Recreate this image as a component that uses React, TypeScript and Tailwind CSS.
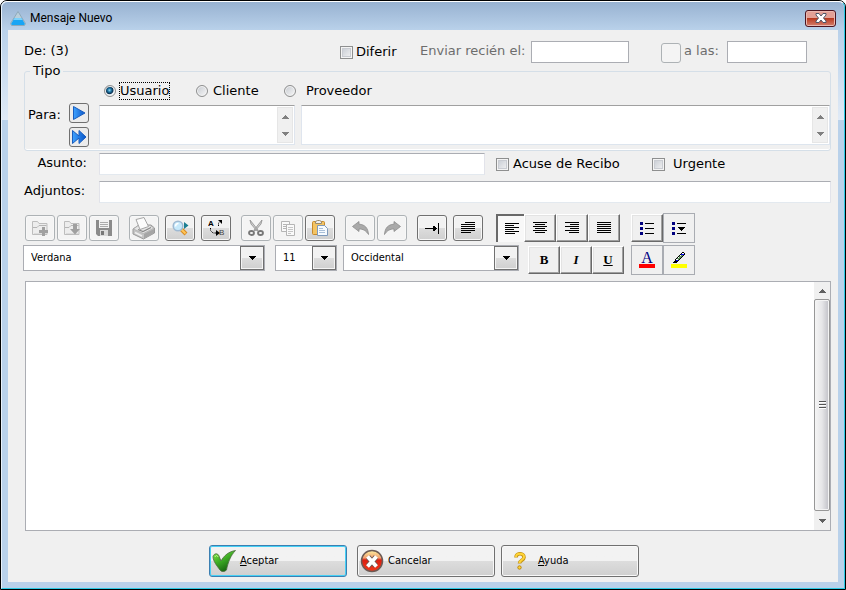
import type { InputHTMLAttributes, ReactNode } from 'react';

const fieldClass =
    'min-w-0 border border-t-[#abadb3] border-x-[#e2e3ea] border-b-[#e3e9ef] bg-white text-[13px] leading-4 outline-none';
const plainFieldClass = 'h-[22px] border border-[#abadb3] bg-white px-1 text-[13px] outline-none';

const Check = (props: InputHTMLAttributes<HTMLInputElement>) => (
    <input
        type="checkbox"
        className="size-[13px] shrink-0 appearance-none border border-[#8e8f8f] bg-linear-to-br from-[#c3c8d0] to-[#f6f6f6] shadow-[inset_0_0_0_1px_#f4f4f4,inset_0_0_0_2px_#c9ccd2] checked:bg-[#4b6a9c]"
        {...props}
    />
);

const Radio = (props: InputHTMLAttributes<HTMLInputElement>) => (
    <input
        type="radio"
        name="tipo"
        className="size-3 shrink-0 appearance-none rounded-full border border-[#8e8f8f] bg-linear-to-br from-[#c6cad0] to-[#f8f8f8] shadow-[inset_0_0_0_1px_#f4f4f4] checked:bg-[radial-gradient(circle_at_45%_42%,#9fdcf5_0,#1f7aa8_22%,#0b2f4f_44%,#eef2f5_56%)]"
        {...props}
    />
);

const Arrow = ({ down = false, color = '#606060' }: { down?: boolean; color?: string }) => (
    <svg width="7" height="4" viewBox="0 0 7 4" fill={color} shapeRendering="crispEdges">
        {down ? <path d="M0 0h7v1H0zM1 1h5v1H1zM2 2h3v1H2zM3 3h1v1H3z" /> : <path d="M3 0h1v1H3zM2 1h3v1H2zM1 2h5v1H1zM0 3h7v1H0z" />}
    </svg>
);

const SmallScroll = () => (
    <div className="my-px mr-px flex w-4 shrink-0 flex-col justify-between border border-[#e6e6e6] bg-[#f0f0f0]">
        <button type="button" aria-label="Subir" className="flex h-[18px] items-center justify-center">
            <Arrow color="#808080" />
        </button>
        <button type="button" aria-label="Bajar" className="flex h-[18px] items-center justify-center">
            <Arrow down color="#808080" />
        </button>
    </div>
);

const ScrollArea = ({ label, className }: { label: string; className: string }) => (
    <div className={`flex h-10 border border-t-[#a0a0a0] border-x-[#dfe5ee] border-b-[#dde5ee] bg-white ${className}`}>
        <textarea aria-label={label} className="min-w-0 flex-1 resize-none overflow-hidden px-1 text-[13px] outline-none" />
        <SmallScroll />
    </div>
);

type ToolProps = { label: string; disabled?: boolean; children: ReactNode };

const Tool = ({ label, disabled, children }: ToolProps) => (
    <button
        type="button"
        aria-label={label}
        disabled={disabled}
        className="flex h-[26px] w-[30px] items-center justify-center rounded-[3px] border border-[#707070] bg-linear-to-b from-[#f2f2f2] from-50% via-[#dddddd] via-50% to-[#cfcfcf] shadow-[inset_0_0_0_1px_#f8f8f8] disabled:border-[#adb2b5] disabled:bg-[#f4f4f4] disabled:bg-none"
    >
        {children}
    </button>
);

const Toggle = ({ label, pressed, children }: { label: string; pressed?: boolean; children: ReactNode }) => (
    <button
        type="button"
        aria-label={label}
        aria-pressed={!!pressed}
        className={
            pressed
                ? 'flex h-7 w-7 items-center justify-center border-t-2 border-l-2 border-[#696969] bg-[#f8f8f8] pt-px pl-0.5'
                : 'flex h-7 w-8 items-center justify-center border border-t-white border-r-[#696969] border-b-[#696969] border-l-white bg-[#f0f0f0] font-[Liberation_Serif,serif] text-[13px] font-bold shadow-[inset_-1px_-1px_0_#a0a0a0,inset_1px_1px_0_#e3e3e3]'
        }
    >
        {children}
    </button>
);

const FlatTool = ({ label, children }: { label: string; children: ReactNode }) => (
    <button
        type="button"
        aria-label={label}
        className="flex h-[30px] w-8 items-center justify-center border border-[#a9acb2] bg-[#f0f0f0]"
    >
        {children}
    </button>
);

const Combo = ({ label, value, width }: { label: string; value: string; width: string }) => (
    <div className={`relative h-[26px] shrink-0 ${width}`}>
        <select
            aria-label={label}
            className="size-full appearance-none border border-[#abadb3] bg-white pr-6 pl-[7px] text-[11px] font-[DejaVu_Sans_Condensed,DejaVu_Sans,sans-serif] outline-none"
        >
            <option>{value}</option>
        </select>
        <span className="pointer-events-none absolute top-px right-px flex h-6 w-6 items-center justify-center border border-[#707070] bg-linear-to-b from-[#f2f2f2] from-50% via-[#dddddd] via-50% to-[#cfcfcf] shadow-[inset_0_0_0_1px_#f4f4f4]">
            <Arrow down color="#000" />
        </span>
    </div>
);

const Lines = ({ rows }: { rows: [number, number][] }) => (
    <svg width="14" height="13" viewBox="0 0 14 13" shapeRendering="crispEdges">
        {rows.map(([x, w], i) => (
            <rect key={i} x={x} y={i * 2} width={w} height="1" fill="#000" />
        ))}
    </svg>
);

const leftRows: [number, number][] = [[0, 14], [0, 9], [0, 14], [0, 9], [0, 14], [0, 10]];
const centerRows: [number, number][] = [[0, 14], [2, 10], [0, 14], [2, 10], [0, 14], [2, 10]];
const rightRows: [number, number][] = [[0, 14], [5, 9], [0, 14], [5, 9], [0, 14], [4, 10]];
const fullRows: [number, number][] = [[0, 14], [0, 14], [0, 14], [0, 14], [0, 14], [0, 14]];
const paragraphRows: [number, number][] = [[4, 10], [0, 14], [0, 14], [0, 14], [0, 14], [0, 10]];

const FolderIcon = ({ children }: { children: ReactNode }) => (
    <svg width="16" height="16" viewBox="0 0 16 16">
        <path d="M.5 14.5v-13h5l1.500 2h8v11z" fill="#ededed" stroke="#bdbdbd" />
        <path d="M1 7.500h4l2-2h7.500" fill="none" stroke="#b5b5b5" />
        <path d="M2 13.500h12" stroke="#dcdcdc" />
        {children}
    </svg>
);

const SaveIcon = () => (
    <svg width="16" height="16" viewBox="0 0 16 16">
        <path d="M0 0h16v16H2l-2-2z" fill="#8b8b8b" />
        <path d="M3 0h10v8H3z" fill="#f1f1f1" />
        <path d="M4 2.500h8M4 4.500h8M4 6.500h8" stroke="#aaa" />
        <path d="M4 10h8v6H4z" fill="#d9d9d9" />
        <path d="M5 11h3v4H5z" fill="#777" />
    </svg>
);

const PrintIcon = () => (
    <svg width="24" height="23" viewBox="0 0 24 23">
        <path d="M1 12l6-4 12 0 3.500 3v5l-11 6-10.500-5z" fill="#c4c4c4" stroke="#9a9a9a" />
        <path d="M1.500 12l10 4.500 10.500-5.500-4-2.500-11-.5z" fill="#e6e6e6" stroke="#a8a8a8" strokeWidth=".7" />
        <path d="M4 2.500l8-2 4.500 9-8.500 3z" fill="#fcfcfc" stroke="#a5a5a5" />
        <path d="M6 12.500l5 2 8-4" fill="none" stroke="#888" strokeWidth="1.200" />
        <path d="M12 17v4.500l10-5.500v-4z" fill="#a5a5a5" />
        <path d="M3 15.500l7 3.500" stroke="#efefef" strokeWidth="1.500" />
    </svg>
);

const FindIcon = () => (
    <svg width="17" height="16" viewBox="0 0 17 16">
        <path d="M9 9l5 5" stroke="#d88a22" strokeWidth="4" />
        <path d="M9 9l4.500 4.500" stroke="#ffc659" strokeWidth="2" />
        <circle cx="6" cy="6" r="4.800" fill="#c6e9fb" stroke="#9fb9d2" strokeWidth="1.500" />
        <path d="M3.500 6.500a3 3 0 0 1 3-3" stroke="#fff" strokeWidth="1.500" fill="none" />
        <path d="M12 2v7l4.500-3.500z" fill="#1c7e92" />
    </svg>
);

const ReplaceIcon = () => (
    <svg width="17" height="16" viewBox="0 0 17 16" fontFamily="Liberation Sans, sans-serif" fontSize="8">
        <text x="0" y="6" fontWeight="bold">A</text>
        <text x="11" y="15" fill="#444">B</text>
        <path d="M2.500 8v2.500l2.500 2.500h3" stroke="#000" strokeDasharray="1.500 1" fill="none" />
        <path d="M8 10l4 3-4 3z" />
        <path d="M10.500 6V3l2-1.500" stroke="#000" fill="none" strokeDasharray="1.500 1" />
        <path d="M10 0h4v4z" />
    </svg>
);

const CutIcon = () => (
    <svg width="16" height="16" viewBox="0 0 16 16" fill="none">
        <path d="M2 0l1 4 6 7 1-1zM14 0l-1 4-6 7-1-1z" fill="#cfcfcf" stroke="#8d8d8d" strokeWidth=".8" />
        <ellipse cx="3.500" cy="13" rx="2.500" ry="2" stroke="#777" strokeWidth="1.800" />
        <ellipse cx="12.500" cy="13" rx="2.500" ry="2" stroke="#777" strokeWidth="1.800" />
    </svg>
);

const CopyIcon = () => (
    <svg width="14" height="15" viewBox="0 0 14 15" fill="#fafafa" stroke="#b5b5b5">
        <path d="M.5.5h8v10h-8z" />
        <path d="M2 3.500h5M2 5.500h5M2 7.500h5" />
        <path d="M5.500 3.500h8v11h-8z" />
        <path d="M7 6.500h5M7 8.500h5M7 10.500h5M7 12.500h3" stroke="#c5c5c5" />
    </svg>
);

const PasteIcon = () => (
    <svg width="16" height="16" viewBox="0 0 16 16">
        <rect x=".5" y="1.500" width="12" height="13" rx="1" fill="#f4c463" stroke="#c6892c" />
        <path d="M3.500 3.500v-2l2-1h2l2 1v2z" fill="#eee" stroke="#9a8a6a" />
        <path d="M5.500 5.500h7l3 3v7h-10z" fill="#f7fbff" stroke="#7e99bb" />
        <path d="M7 8.500h4M7 10.500h6M7 12.500h6" stroke="#a9bfd8" />
    </svg>
);

const UndoIcon = ({ redo = false }: { redo?: boolean }) => (
    <svg width="17" height="14" viewBox="0 0 17 14">
        <path
            d={
                redo
                    ? 'M16.500 5.500L10 .5v2.700C4 3.500 1 7 .5 13.500 3 9.500 6 8 10 8v2.500z'
                    : 'M.5 5.500L7 .5v2.700c6 .3 9 3.800 9.500 10.300C14 9.500 11 8 7 8v2.500z'
            }
            fill="#a9a9a9"
            stroke="#8c8c8c"
            strokeWidth=".8"
        />
    </svg>
);

const TabIcon = () => (
    <svg width="15" height="11" viewBox="0 0 15 11" shapeRendering="crispEdges">
        <path d="M0 5h12v1H0zM13 0h1v11h-1zM8 3h1v5H8zM9 3h1v5H9zM10 4h1v3h-1z" />
    </svg>
);

const ListIcon = ({ menu = false }: { menu?: boolean }) => (
    <svg width="15" height="13" viewBox="0 0 15 13" shapeRendering="crispEdges">
        <path d="M0 0h3v3H0zM0 5h3v3H0zM0 10h3v3H0z" fill="#000080" />
        {menu ? <path d="M5 1h9v1H5zM5 11h9v1H5zM6 5h7v1H6zM7 6h5v1H7zM8 7h3v1H8zM9 8h1v1H9z" /> : <path d="M5 1h9v1H5zM5 6h9v1H5zM5 11h9v1H5z" />}
    </svg>
);

const MarkerIcon = () => (
    <svg width="16" height="16" viewBox="0 0 16 16" shapeRendering="crispEdges">
        <path d="M11 0h2v1h-2zM10 1h1v1h-1zM13 1h1v2h-1zM9 2h1v1H9zM8 3h1v1H8zM12 3h1v1h-1zM7 4h1v1H7zM11 4h1v1h-1zM6 5h1v1H6zM10 5h1v1h-1zM5 6h1v1H5zM9 6h1v1H9zM4 7h1v2H4zM8 7h1v1H8zM7 8h1v1H7zM3 9h4v1H3zM2 10h4v1H2z" />
        <path d="M11 1h2v1h-2zM9 3h1v1H9zM7 5h1v1H7zM5 7h2v1H5z" fill="#fff" />
        <path d="M10 2h3v1h-3zM5 8h2v1H5z" fill="#0000ff" />
        <path d="M10 3h2v1h-2zM8 4h3v1H8zM8 5h2v1H8zM6 6h3v1H6zM7 7h1v1H7z" fill="#5c8f5c" />
        <path d="M0 12h16v4H0z" fill="#ff0" />
    </svg>
);

const PlayIcon = ({ double = false }: { double?: boolean }) => (
    <svg width="16" height="16" viewBox="0 0 16 16">
        <defs>
            <linearGradient id="play" x1="0" x2="1">
                <stop offset="0" stopColor="#3fa2ff" />
                <stop offset="1" stopColor="#0a56c8" />
            </linearGradient>
        </defs>
        <path
            d={double ? 'M1.500 1.500L8 7V1.500L15 8l-7 6.500V9l-6.500 5.500z' : 'M2.500 1.500L14 8 2.500 14.500z'}
            fill="url(#play)"
            stroke="#1a5dbd"
        />
    </svg>
);

const OkIcon = () => (
    <svg width="24" height="24" viewBox="0 0 24 24">
        <defs>
            <linearGradient id="ok" x1="0" y1="0" x2=".6" y2="1">
                <stop offset="0" stopColor="#8aea4c" />
                <stop offset=".5" stopColor="#3fae25" />
                <stop offset="1" stopColor="#145f0d" />
            </linearGradient>
        </defs>
        <path d="M1 7.500C2 4 6 4 7 7l2 5C12 6.500 17 2.500 23.500 1.500 19 6 16 13 14.500 21c-2 2-5 2-6.500 0C5 17 1 12 1 7.500z" fill="url(#ok)" stroke="#4b6b3f" strokeWidth=".8" />
        <path d="M3 8c1-2 2-2 3 0" stroke="#c5ff9b" fill="none" />
    </svg>
);

const CancelIcon = () => (
    <svg width="24" height="24" viewBox="0 0 24 24">
        <defs>
            <linearGradient id="cancel" x1="0" y1="0" x2="0" y2="1">
                <stop offset="0" stopColor="#fff0a0" />
                <stop offset=".35" stopColor="#f0a070" />
                <stop offset=".45" stopColor="#dd1e10" />
                <stop offset="1" stopColor="#ef3a1c" />
            </linearGradient>
        </defs>
        <circle cx="12" cy="12" r="10.500" fill="url(#cancel)" stroke="#6b5a55" strokeWidth="1.500" />
        <path d="M8 8l8 9M16 8l-8 9" stroke="#6b5550" strokeWidth="5.500" />
        <path d="M7.500 7.500l9 10M16.500 7.500l-9 10" stroke="#fff" strokeWidth="3.800" />
    </svg>
);

const HelpIcon = () => (
    <svg width="12" height="18" viewBox="0 0 12 18">
        <path d="M2 5.500c0-5 8-5 8 0 0 3-4.500 2.500-4.500 6" fill="none" stroke="#c39318" strokeWidth="3.600" />
        <path d="M2 5c0-4.500 8-4.500 8 0 0 3-4.500 3-4.500 6" fill="none" stroke="#ffd437" strokeWidth="2" />
        <circle cx="5.500" cy="15.500" r="1.700" fill="#ffd437" stroke="#b98712" />
    </svg>
);

const DialogButton = ({ icon, primary, children }: { icon: ReactNode; primary?: boolean; children: ReactNode }) => (
    <button
        type="button"
        className={`flex h-8 w-[138px] items-center rounded-[3px] border bg-linear-to-b from-[#f2f2f2] from-50% via-[#dddddd] via-50% to-[#cfcfcf] pl-0.5 text-[11px] font-[DejaVu_Sans_Condensed,DejaVu_Sans,sans-serif] ${
            primary ? 'border-[#3c7fb1] shadow-[inset_0_0_0_1px_#46d0f5]' : 'border-[#707070] shadow-[inset_0_0_0_1px_#f8f8f8]'
        }`}
    >
        {icon}
        <span>{children}</span>
    </button>
);

const EdgeGlow = () => (
    <div className="w-1.5 shrink-0">
        <div className="h-[90px] bg-linear-to-b from-[#b9d1ea] to-[#e0eaf6]" />
    </div>
);

export default function App() {
    return (
        <div className="flex min-h-screen flex-col rounded-t-[7px] border border-black bg-[#b9d1ea] font-[DejaVu_Sans,Verdana,sans-serif] text-[13px] leading-4 text-black">
            <div className="flex flex-1 flex-col rounded-t-md border border-t-white border-r-[#2bc9e4] border-b-[#2bc9e4] border-l-[#e8f1fa] pb-1.5">
                <header className="flex h-7 items-center rounded-t-md bg-linear-to-b from-[#98b2d1] to-[#b9d1ea] px-2 pt-1">
                    <svg width="16" height="15" viewBox="0 0 16 15">
                        <path d="M8 .5l7.500 12-1 2h-13l-1-2z" fill="#b9cfdb" stroke="#8fa9ba" />
                        <path d="M4.500 7h7l3.500 6-1 1H2l-1-1z" fill="#18a5f5" />
                        <path d="M4.500 7h7l1 2h-9z" fill="#7bd1fa" />
                    </svg>
                    <h1 className="ml-1 flex-1 text-xs font-[Roboto,sans-serif]">Mensaje Nuevo</h1>
                    <button
                        type="button"
                        aria-label="Cerrar"
                        className="flex h-[17px] w-[31px] items-center justify-center rounded-[3px] border border-[#4c1420] bg-linear-to-b from-[#e3a096] from-45% via-[#b8391f] via-50% to-[#d47e6c] shadow-[inset_0_0_0_1px_#eab8b0]"
                    >
                        <svg width="12" height="10" viewBox="0 0 12 10">
                            <path d="M1 .5h3l2 2.500 2-2.500h3V2L8.500 5 11 8v1.500H8L6 7 4 9.500H1V8l2.500-3L1 2z" fill="#fff" stroke="#4e5668" />
                        </svg>
                    </button>
                </header>

                <div className="flex flex-1">
                    <EdgeGlow />
                    <main className="flex min-w-0 flex-1 flex-col bg-[#f0f0f0] pt-[11px] pr-[7px] pb-[5px] pl-[15px]">
                        <div className="flex flex-col pl-px">
                            <div className="flex h-[22px] items-center">
                                <span className="w-[316px] shrink-0 pb-0.5">De: (3)</span>
                                <label className="flex w-20 shrink-0 items-center gap-[3px]">
                                    <Check />
                                    Diferir
                                </label>
                                <label htmlFor="fecha" className="w-[111px] shrink-0 pb-0.5 text-[#6d6d6d]">Enviar recién el:</label>
                                <input id="fecha" className={`${plainFieldClass} w-[98px]`} />
                                <button type="button" aria-label="Elegir fecha" disabled className="mt-0.5 ml-8 size-5 rounded-[3px] border border-[#adb2b5] bg-[#f4f4f4]" />
                                <label htmlFor="hora" className="ml-[3px] w-[43px] pb-0.5 text-[#6d6d6d]">a las:</label>
                                <input id="hora" className={`${plainFieldClass} w-20`} />
                            </div>

                            <fieldset className="rounded-[3px] border border-[#d5dfe8] pb-[5px] shadow-[inset_0_-1px_0_#fff]">
                                <legend className="ml-[5px] px-[3px]">Tipo</legend>
                                <div className="flex h-[22px] items-center pt-0.5 pl-[79px]">
                                    <label className="flex w-[92px] items-center gap-[3px]">
                                        <Radio defaultChecked />
                                        <span className="border border-dotted border-black">Usuario</span>
                                    </label>
                                    <label className="flex w-[88px] items-center gap-[5px]">
                                        <Radio />
                                        Cliente
                                    </label>
                                    <label className="flex items-center gap-[10px]">
                                        <Radio />
                                        Proveedor
                                    </label>
                                </div>
                                <div className="mt-1 flex">
                                    <span className="w-11 shrink-0 pt-0.5 pl-[3px]">Para:</span>
                                    <div className="-mt-0.5 flex w-[30px] shrink-0 flex-col gap-1">
                                        <button type="button" aria-label="Agregar" className="flex size-5 items-center justify-center rounded-[3px] border border-[#707070] bg-[#ececec]">
                                            <PlayIcon />
                                        </button>
                                        <button type="button" aria-label="Agregar todos" className="-mb-2 flex size-5 items-center justify-center rounded-[3px] border border-[#707070] bg-[#ececec]">
                                            <PlayIcon double />
                                        </button>
                                    </div>
                                    <ScrollArea label="Usuarios" className="w-[196px] shrink-0" />
                                    <ScrollArea label="Destinatarios" className="ml-1.5 flex-1" />
                                </div>
                            </fieldset>

                            <div className="mt-0.5 flex h-[22px] items-center">
                                <label htmlFor="asunto" className="w-[75px] shrink-0 pr-3 pb-0.5 text-right">Asunto:</label>
                                <input id="asunto" className={`${fieldClass} h-[22px] flex-1 px-1`} />
                                <div className="flex w-[346px] shrink-0 pl-[11px]">
                                    <label className="flex w-[156px] items-center gap-1">
                                        <Check />
                                        Acuse de Recibo
                                    </label>
                                    <label className="flex items-center gap-2">
                                        <Check />
                                        Urgente
                                    </label>
                                </div>
                            </div>

                            <div className="mt-1.5 flex h-[22px] items-center">
                                <label htmlFor="adjuntos" className="w-[75px] shrink-0 pb-0.5">Adjuntos:</label>
                                <input id="adjuntos" className={`${fieldClass} h-[22px] flex-1 px-1`} />
                            </div>
                        </div>

                        <div className="mt-[10px] flex h-[30px] items-center gap-[10px] pl-0.5">
                            <div className="flex gap-0.5">
                                <Tool label="Nuevo" disabled>
                                    <FolderIcon>
                                        <path d="M10 7h3v3h3v3h-3v3h-3v-3H7v-3h3z" fill="#a0a0a0" />
                                    </FolderIcon>
                                </Tool>
                                <Tool label="Abrir" disabled>
                                    <FolderIcon>
                                        <path d="M9 4h4v5h3l-5 5.500-5-5.500h3z" fill="#a0a0a0" />
                                    </FolderIcon>
                                </Tool>
                                <Tool label="Guardar" disabled><SaveIcon /></Tool>
                            </div>
                            <div className="flex gap-1.5">
                                <Tool label="Imprimir" disabled><PrintIcon /></Tool>
                                <Tool label="Buscar"><FindIcon /></Tool>
                                <Tool label="Reemplazar"><ReplaceIcon /></Tool>
                            </div>
                            <div className="flex gap-0.5">
                                <Tool label="Cortar" disabled><CutIcon /></Tool>
                                <Tool label="Copiar" disabled><CopyIcon /></Tool>
                                <Tool label="Pegar"><PasteIcon /></Tool>
                            </div>
                            <div className="flex gap-0.5">
                                <Tool label="Deshacer" disabled><UndoIcon /></Tool>
                                <Tool label="Rehacer" disabled><UndoIcon redo /></Tool>
                            </div>
                            <div className="flex gap-1.5">
                                <Tool label="Tabulación"><TabIcon /></Tool>
                                <Tool label="Párrafo"><Lines rows={paragraphRows} /></Tool>
                            </div>
                            <div className="ml-[3px] flex">
                                <Toggle label="Izquierda" pressed><Lines rows={leftRows} /></Toggle>
                                <Toggle label="Centrar"><Lines rows={centerRows} /></Toggle>
                                <Toggle label="Derecha"><Lines rows={rightRows} /></Toggle>
                                <Toggle label="Justificar"><Lines rows={fullRows} /></Toggle>
                            </div>
                            <div className="ml-px flex items-center">
                                <Toggle label="Viñetas"><ListIcon /></Toggle>
                                <FlatTool label="Estilo de viñetas"><ListIcon menu /></FlatTool>
                            </div>
                        </div>

                        <div className="mt-0.5 flex h-[30px] items-center">
                            <div className="flex self-start">
                                <Combo label="Fuente" value="Verdana" width="w-[242px]" />
                                <div className="w-[10px]" />
                                <Combo label="Tamaño" value="11" width="w-[62px]" />
                                <div className="w-1.5" />
                                <Combo label="Alfabeto" value="Occidental" width="w-44" />
                            </div>
                            <div className="ml-[9px] flex">
                                <Toggle label="Negrita">B</Toggle>
                                <Toggle label="Cursiva"><i>I</i></Toggle>
                                <Toggle label="Subrayado"><u>U</u></Toggle>
                            </div>
                            <div className="ml-[7px] flex">
                                <FlatTool label="Color de texto">
                                    <span className="flex flex-col items-center font-[Liberation_Serif,serif] text-base leading-3 text-[#000080]">
                                        A
                                        <span className="h-1 w-4 bg-[#f00]" />
                                    </span>
                                </FlatTool>
                                <FlatTool label="Color de resaltado"><MarkerIcon /></FlatTool>
                            </div>
                        </div>

                        <div className="mt-1.5 ml-0.5 flex min-h-40 flex-1 border border-[#abadb3] bg-white">
                            <textarea aria-label="Mensaje" className="min-w-0 flex-1 resize-none p-1 text-[13px] outline-none" />
                            <div className="flex w-4 shrink-0 flex-col bg-[#f0f0f0]">
                                <button type="button" aria-label="Subir" className="flex h-[17px] items-center justify-center"><Arrow /></button>
                                <div className="flex flex-1 flex-col items-center justify-center gap-px rounded-xs border border-[#979797] bg-linear-to-r from-[#f5f5f5] via-[#e6e6e8] to-[#c0c0c6] shadow-[inset_0_0_0_1px_#f4f4f4]">
                                    <div className="h-0.5 w-[7px] border-b border-white bg-[#555]" />
                                    <div className="h-0.5 w-[7px] border-b border-white bg-[#555]" />
                                    <div className="h-0.5 w-[7px] border-b border-white bg-[#555]" />
                                </div>
                                <button type="button" aria-label="Bajar" className="flex h-[19px] items-center justify-center"><Arrow down /></button>
                            </div>
                        </div>

                        <div className="mt-3.5 flex justify-center gap-1.5 pr-1.5">
                            <div className="mr-1 flex">
                                <DialogButton primary icon={<OkIcon />}>
                                    <span className="pl-1"><u>A</u>ceptar</span>
                                </DialogButton>
                            </div>
                            <DialogButton icon={<CancelIcon />}>
                                <span className="pl-1">Cancelar</span>
                            </DialogButton>
                            <DialogButton icon={<span className="ml-[10px] flex w-6"><HelpIcon /></span>}>
                                <u>A</u>yuda
                            </DialogButton>
                        </div>
                    </main>
                    <EdgeGlow />
                </div>
            </div>
        </div>
    );
}
